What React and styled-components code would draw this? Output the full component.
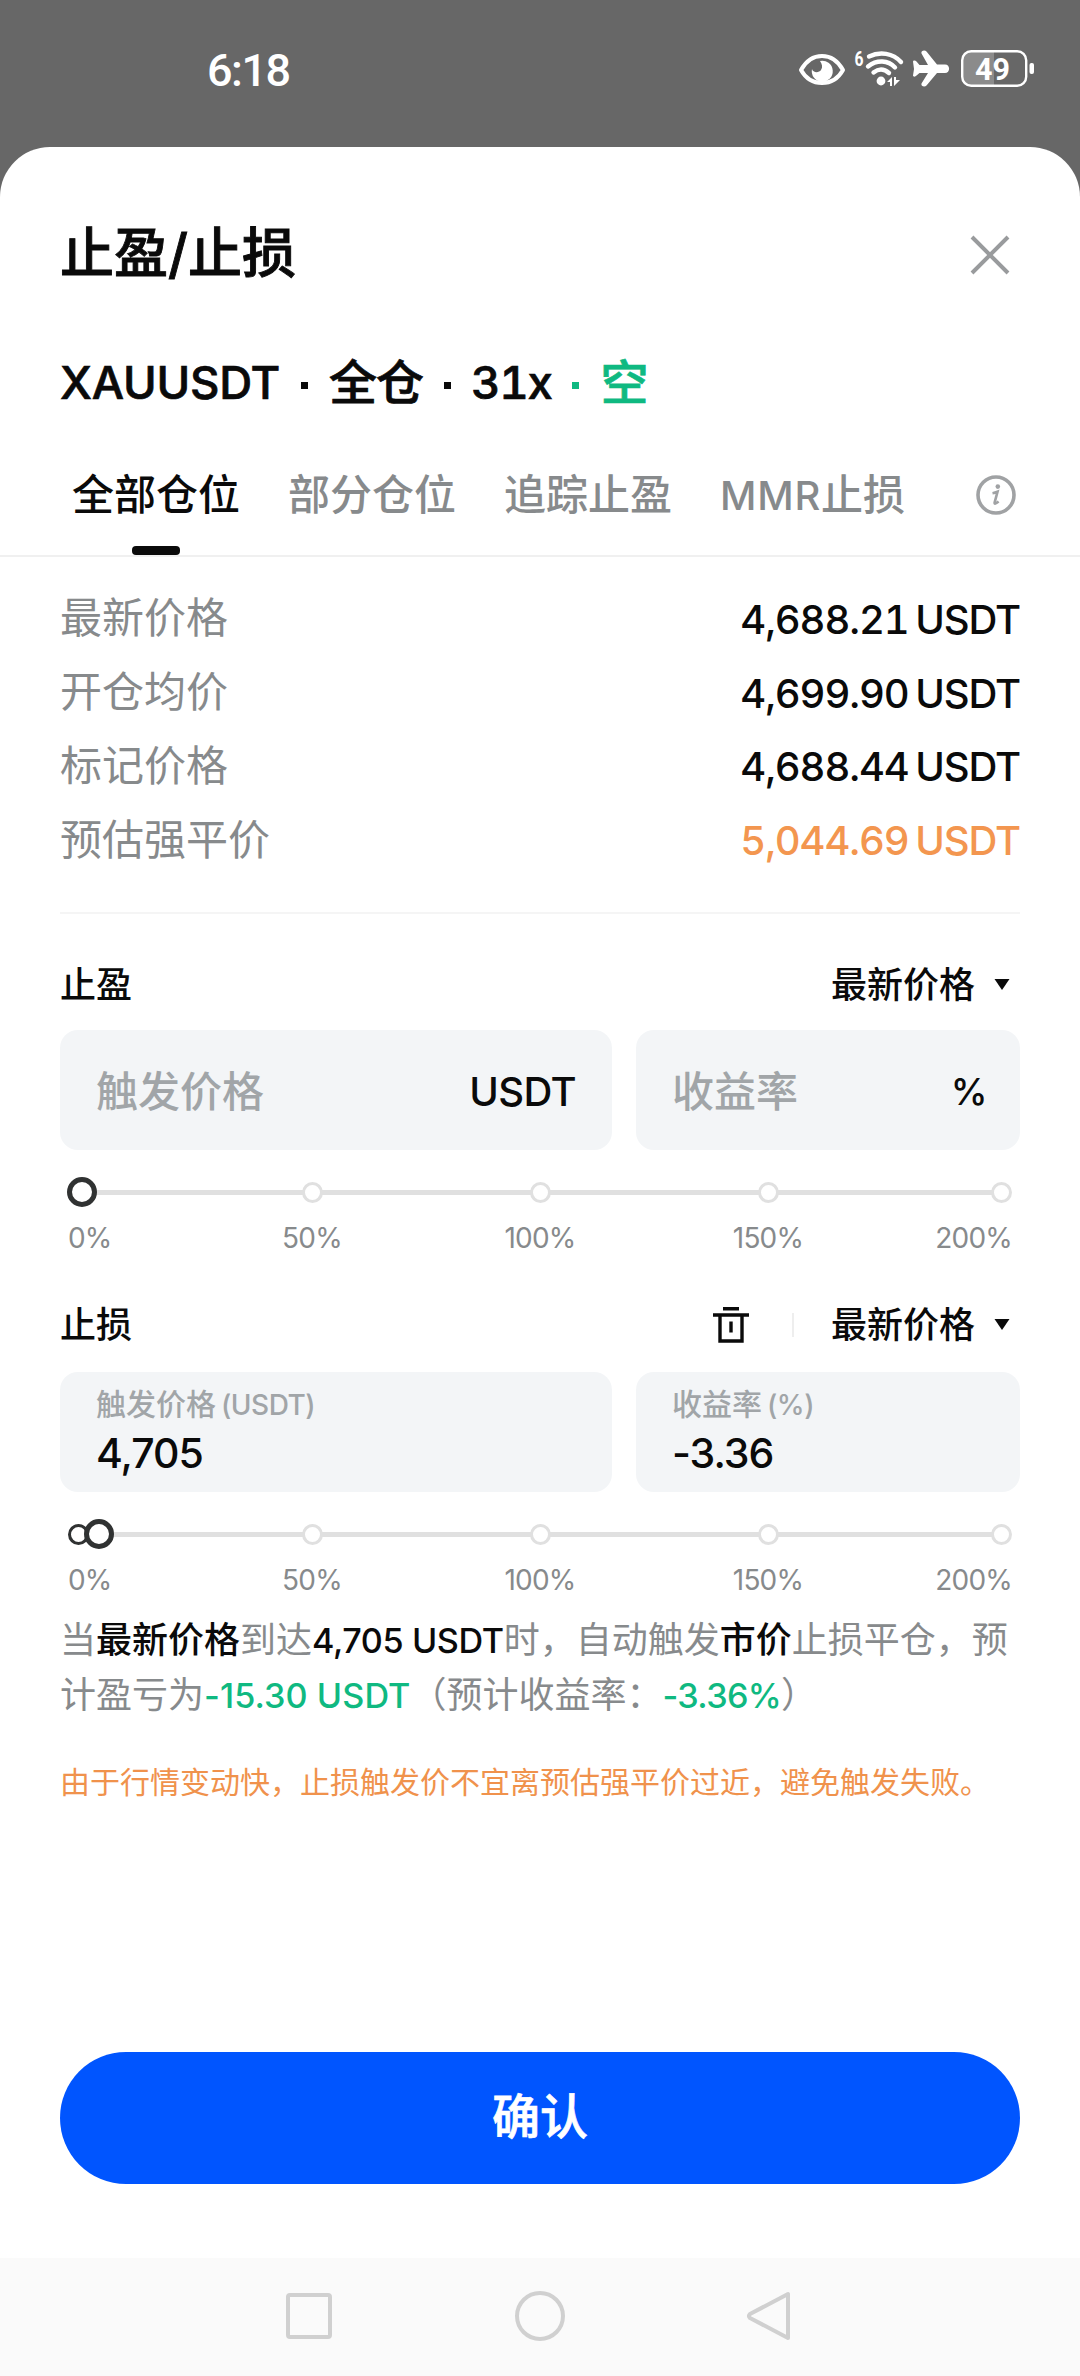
import React from 'react';
import styled, { createGlobalStyle } from 'styled-components';

const priceRows = [
  { label: '最新价格', value: '4,688.21 USDT' },
  { label: '开仓均价', value: '4,699.90 USDT' },
  { label: '标记价格', value: '4,688.44 USDT' },
  { label: '预估强平价', value: '5,044.69 USDT', warn: true },
];

const steps = ['0%', '50%', '100%', '150%', '200%'];

const StatusIcons = () => (
  <svg width="240" height="44" viewBox="796 48 240 44" fill="none">
    <path
      d="M800 70C805 61 812 56 821 56S837 61 842 70C837 79 830 83 821 83S805 79 800 70Z"
      stroke="#fff"
      strokeWidth="4"
      strokeLinejoin="round"
    />
    <path
      d="M819 61A10.5 10.5 0 1 1 811 69C812 73 818 73 820 70C822 67 821 64 819 61Z"
      fill="#fff"
    />
    <text
      x="853.5"
      y="66"
      fill="#fff"
      fontFamily="Roboto, sans-serif"
      fontWeight="700"
      fontSize="20"
      textLength="9"
      lengthAdjust="spacingAndGlyphs"
    >
      6
    </text>
    <g stroke="#fff" strokeWidth="4.4" strokeLinecap="round">
      <path d="M868 56.5C879 51 892 53 900 62" />
      <path d="M867 66.5C876 59.5 887 60 894 67.5" />
      <path d="M872.5 72.5C877.5 68.5 883 68.5 888 73" />
    </g>
    <circle cx="880" cy="81" r="4.4" fill="#fff" />
    <path d="M886 82L891 77V86H889V82ZM893 77V86L899 80H895V77Z" fill="#fff" />
    <path
      d="M912 61.5C912 60 914.5 60 915.5 61.5L918.5 65H927L920.5 53.5C919.5 50.5 924 49.5 925.5 51.5L936 64.5H944C949.5 64.5 949.5 73 944 73H936L925.5 85.5C924 87.5 919.5 86.5 920.5 83.5L927 73H918.5L915.5 75.5C914.5 77 912 77 912 75.5L913 69Z"
      fill="#fff"
    />
    <path d="M969 52H993V85H969C964 85 962 82 962 78V59C962 55 964 52 969 52Z" fill="#8b8b8b" />
    <rect x="961.2" y="51.2" width="64" height="34.6" rx="9" stroke="#fff" strokeWidth="2.4" />
    <rect x="1028.5" y="63" width="4.5" height="11" rx="2" fill="#fff" />
    <text
      x="974"
      y="80"
      fill="#fff"
      fontFamily="Roboto, sans-serif"
      fontWeight="700"
      fontSize="32"
      textLength="35"
      lengthAdjust="spacingAndGlyphs"
    >
      49
    </text>
  </svg>
);

const CloseIcon = () => (
  <svg width="40" height="40" viewBox="0 0 40 40" stroke="#999b9d" strokeWidth="4">
    <path d="M2 2L38 38M38 2L2 38" />
  </svg>
);

const InfoIcon = () => (
  <svg width="40" height="40" viewBox="0 0 40 40" fill="none">
    <circle cx="20" cy="20" r="18" stroke="#a0a2a4" strokeWidth="3.6" />
    <circle cx="21.8" cy="11.6" r="2.3" fill="#a0a2a4" />
    <path
      d="M16.5 18.3C18.5 18 20 17.5 21.5 16.8L18.6 27.6C18.3 29.2 19.6 29 22.6 26.6"
      stroke="#a0a2a4"
      strokeWidth="2.6"
    />
  </svg>
);

const TrashIcon = () => (
  <svg width="36" height="36" viewBox="0 0 36 36" fill="none" stroke="#0a0a0a">
    <path d="M10 1.7H26M0 8H36" strokeWidth="3.4" />
    <path d="M7 8V34H29V8" strokeWidth="3.4" />
    <path d="M18 14.5V25.5" strokeWidth="3.4" />
  </svg>
);

const Caret = () => (
  <svg width="16" height="11" viewBox="0 0 16 11">
    <path d="M0.5 0H15.5L8 11Z" fill="#0a0a0a" />
  </svg>
);

const Slider = ({ thumb, passed }) => (
  <SliderWrap>
    <Track>
      {steps.map((step, i) => (
        <Dot key={step} $active={passed && i === 0} />
      ))}
      <Thumb style={{ left: `${thumb}px` }} />
    </Track>
    <Scale>
      {steps.map((step) => (
        <span key={step}>{step}</span>
      ))}
    </Scale>
  </SliderWrap>
);

const App = () => {
  return (
    <Page>
      <GlobalStyle />
      <StatusBar>
        <Time>6:18</Time>
        <StatusIcons />
      </StatusBar>

      <Sheet>
        <Header>
          <Title>止盈/止损</Title>
          <CloseIcon />
        </Header>

        <Symbol>
          <Latin>XAUUSDT</Latin>
          <Sep />
          全仓
          <Sep />
          <Leverage>31x</Leverage>
          <Short>
            <Sep />空
          </Short>
        </Symbol>

        <Tabs>
          <Tab $active>全部仓位</Tab>
          <Tab>部分仓位</Tab>
          <Tab>追踪止盈</Tab>
          <Tab>
            <Latin $spacing="0.02em">MMR</Latin>止损
          </Tab>
          <InfoButton>
            <InfoIcon />
          </InfoButton>
        </Tabs>

        <Prices>
          {priceRows.map((row) => (
            <PriceRow key={row.label}>
              <Label>{row.label}</Label>
              <Value $warn={row.warn}>{row.value}</Value>
            </PriceRow>
          ))}
        </Prices>
        <Divider />

        <SectionHead>
          <span>止盈</span>
          <PriceType>
            最新价格
            <Caret />
          </PriceType>
        </SectionHead>
        <Fields>
          <Field>
            <Placeholder>触发价格</Placeholder>
            <Unit>USDT</Unit>
          </Field>
          <Field>
            <Placeholder>收益率</Placeholder>
            <Unit $percent>%</Unit>
          </Field>
        </Fields>
        <Slider thumb={-1} />

        <SectionHead $second>
          <span>止损</span>
          <Actions>
            <TrashIcon />
            <Bar />
            <PriceType>
              最新价格
              <Caret />
            </PriceType>
          </Actions>
        </SectionHead>
        <Fields>
          <Field $filled>
            <FieldLabel>
              触发价格<FieldUnit>(USDT)</FieldUnit>
            </FieldLabel>
            <FieldValue>4,705</FieldValue>
          </Field>
          <Field $filled>
            <FieldLabel>
              收益率<FieldUnit>(%)</FieldUnit>
            </FieldLabel>
            <FieldValue>-3.36</FieldValue>
          </Field>
        </Fields>
        <Slider thumb={16} passed />

        <Summary>
          当<Strong>最新价格</Strong>到达
          <Strong>
            <Latin $spacing="-0.012em">4,705 USDT</Latin>
          </Strong>
          时，自动触发<Strong>市价</Strong>止损平仓，预计盈亏为
          <Gain $spacing="0.002em">-15.30 USDT</Gain>（预计收益率：
          <Gain $spacing="-0.02em">-3.36%</Gain>）
        </Summary>
        <Warning>由于行情变动快，止损触发价不宜离预估强平价过近，避免触发失败。</Warning>

        <Confirm>确认</Confirm>
      </Sheet>

      <NavBar>
        <svg width="504" height="54" viewBox="288 2289 504 54" fill="none" stroke="#d0d0d0" strokeWidth="4">
          <rect x="288" y="2295" width="42" height="42" rx="2" />
          <circle cx="540" cy="2316" r="23" />
          <path d="M788 2294V2338L750 2318Q748 2316 750 2314Z" strokeLinejoin="round" />
        </svg>
      </NavBar>
    </Page>
  );
};

const GlobalStyle = createGlobalStyle`
  * {
    box-sizing: border-box;
  }
  body {
    margin: 0;
    background: #676767;
  }
  svg {
    display: block;
    flex-shrink: 0;
    overflow: visible;
  }
`;

const Page = styled.div`
  display: flex;
  flex-direction: column;
  width: 1080px;
  height: 2376px;
  overflow: hidden;
  background: #676767;
  color: #0a0a0a;
  font-family: Inter, 'Noto Sans CJK SC', sans-serif;
`;

const StatusBar = styled.div`
  display: flex;
  align-items: center;
  justify-content: space-between;
  height: 147px;
  padding: 0 43px 7px 207px;
`;

const Time = styled.div`
  color: #fff;
  font-family: Roboto, sans-serif;
  font-size: 45px;
  font-weight: 500;
  letter-spacing: -1.5px;
`;

const Sheet = styled.div`
  flex: 1;
  display: flex;
  flex-direction: column;
  padding: 0 60px 74px;
  background: #fff;
  border-radius: 50px 50px 0 0;
`;

const Header = styled.div`
  display: flex;
  align-items: center;
  justify-content: space-between;
  height: 208px;
  padding: 7px 10px 0 0;
`;

const Title = styled.div`
  padding-bottom: 2px;
  font-size: 54px;
  font-weight: 500;
  line-height: 60px;
  -webkit-text-stroke: 0.9px currentColor;
`;

const Symbol = styled.div`
  display: flex;
  align-items: center;
  height: 52px;
  padding-top: 4px;
  font-size: 48px;
  font-weight: 500;
  line-height: 52px;
  letter-spacing: -1px;
  -webkit-text-stroke: 0.7px currentColor;
`;

const Latin = styled.span`
  font-size: 0.95em;
  letter-spacing: ${(props) => props.$spacing || '-0.005em'};
`;

const Leverage = styled.span`
  margin-left: -1px;
  font-size: 0.95em;
  font-variant-numeric: tabular-nums;
  letter-spacing: -0.03em;
`;

const Sep = styled.i`
  width: 7px;
  height: 7px;
  margin: 5px 21px 0;
  background: currentColor;
`;

const Short = styled.span`
  display: flex;
  align-items: center;
  color: #0fb981;
`;

const Tabs = styled.div`
  display: flex;
  gap: 48px;
  margin: 24px -60px 0;
  padding: 0 64px 0 72px;
  border-bottom: 2px solid #f0f0f0;
`;

const Tab = styled.div`
  position: relative;
  height: 124px;
  font-size: 42px;
  font-weight: 500;
  line-height: 128px;
  white-space: nowrap;
  color: ${(props) => (props.$active ? '#0a0a0a' : '#878a8c')};
  &::after {
    content: '';
    display: ${(props) => (props.$active ? 'block' : 'none')};
    position: absolute;
    bottom: 0;
    left: 60px;
    width: 48px;
    height: 9px;
    border-radius: 4px;
    background: #0a0a0a;
  }
`;

const InfoButton = styled.div`
  display: flex;
  align-items: center;
  margin-left: auto;
  padding-top: 3px;
`;

const Prices = styled.div`
  margin-top: 23px;
`;

const PriceRow = styled.div`
  display: flex;
  align-items: center;
  justify-content: space-between;
  height: 73.8px;
`;

const Label = styled.span`
  padding-bottom: 4px;
  font-size: 42px;
  color: #878a8c;
`;

const Value = styled.span`
  padding-top: 5px;
  font-size: 40px;
  font-weight: 500;
  font-variant-numeric: tabular-nums;
  letter-spacing: -1.1px;
  word-spacing: -3px;
  color: ${(props) => (props.$warn ? '#f3964f' : '#0a0a0a')};
`;

const Divider = styled.div`
  height: 2px;
  margin: 37px 0 22px;
  background: #f5f5f5;
`;

const SectionHead = styled.div`
  display: flex;
  align-items: center;
  justify-content: space-between;
  height: 94px;
  margin-top: ${(props) => (props.$second ? '24px' : '0')};
  margin-bottom: ${(props) => (props.$second ? '2px' : '0')};
  padding-top: 3px;
  font-size: 36px;
  font-weight: 500;
  line-height: 44px;
`;

const PriceType = styled.div`
  display: flex;
  align-items: center;
  gap: 19px;
  padding-right: 10px;
`;

const Actions = styled.div`
  display: flex;
  align-items: center;
`;

const Bar = styled.div`
  width: 2px;
  height: 24px;
  margin: 0 37px 0 43px;
  background: #eee;
`;

const Fields = styled.div`
  display: grid;
  grid-template-columns: 552px 384px;
  gap: 24px;
`;

const Field = styled.div`
  display: flex;
  flex-direction: ${(props) => (props.$filled ? 'column' : 'row')};
  align-items: ${(props) => (props.$filled ? 'flex-start' : 'center')};
  justify-content: ${(props) => (props.$filled ? 'flex-start' : 'space-between')};
  height: 120px;
  padding: ${(props) => (props.$filled ? '8px 36px 0' : '0 36px')};
  border-radius: 18px;
  background: #f3f5f7;
`;

const Placeholder = styled.span`
  padding-bottom: 4px;
  font-size: 42px;
  font-weight: 500;
  color: #a1a5a8;
`;

const Unit = styled.span`
  padding-top: 2px;
  margin-right: ${(props) => (props.$percent ? '-3px' : '0')};
  font-size: ${(props) => (props.$percent ? '37px' : '40px')};
  font-weight: 500;
  letter-spacing: -0.6px;
`;

const FieldLabel = styled.span`
  display: flex;
  align-items: center;
  height: 48px;
  font-size: 30px;
  font-weight: 500;
  line-height: 36px;
  color: #a1a5a8;
`;

const FieldUnit = styled.span`
  margin-left: 5px;
  padding-top: 2px;
  font-size: 28px;
  letter-spacing: -0.5px;
`;

const FieldValue = styled.span`
  font-size: 41px;
  font-weight: 500;
  line-height: 50px;
  letter-spacing: -1px;
`;

const SliderWrap = styled.div`
  margin: 27px 8px 0;
`;

const Track = styled.div`
  position: relative;
  display: grid;
  grid-template-columns: 130px repeat(3, 228px) 130px;
  align-items: center;
  justify-items: center;
  height: 30px;
  background: linear-gradient(#e0e0e0, #e0e0e0) center / 924px 5px no-repeat;
  & > :first-child {
    justify-self: start;
  }
  & > :nth-child(5) {
    justify-self: end;
  }
`;

const Dot = styled.i`
  width: 21px;
  height: 21px;
  border: 3px solid ${(props) => (props.$active ? '#303232' : '#e0e0e0')};
  border-radius: 50%;
  background: #fff;
`;

const Thumb = styled.i`
  position: absolute;
  top: 0;
  width: 30px;
  height: 30px;
  border: 5px solid #303232;
  border-radius: 50%;
  background: #fff;
`;

const Scale = styled.div`
  display: grid;
  grid-template-columns: 130px repeat(3, 228px) 130px;
  justify-items: center;
  height: 30px;
  margin-top: 15px;
  font-size: 28px;
  line-height: 32px;
  letter-spacing: -0.8px;
  color: #878a8c;
  & > :first-child {
    justify-self: start;
  }
  & > :last-child {
    justify-self: end;
  }
`;

const Summary = styled.p`
  margin: 19px 0 0;
  font-size: 36px;
  line-height: 54px;
  color: #878a8c;
`;

const Strong = styled.span`
  font-weight: 500;
  color: #0a0a0a;
`;

const Gain = styled(Latin)`
  font-weight: 500;
  color: #0fb981;
`;

const Warning = styled.p`
  margin: 39px 0 0;
  font-size: 30px;
  line-height: 40px;
  color: #f0924c;
`;

const Confirm = styled.button`
  height: 132px;
  margin-top: auto;
  padding: 0 0 10px;
  border: none;
  border-radius: 66px;
  background: #0055ff;
  color: #fff;
  font-family: inherit;
  font-size: 48px;
  font-weight: 500;
  -webkit-text-stroke: 0.7px currentColor;
`;

const NavBar = styled.div`
  display: flex;
  justify-content: center;
  height: 118px;
  padding-top: 31px;
  background: #fafafa;
`;

export default App;
